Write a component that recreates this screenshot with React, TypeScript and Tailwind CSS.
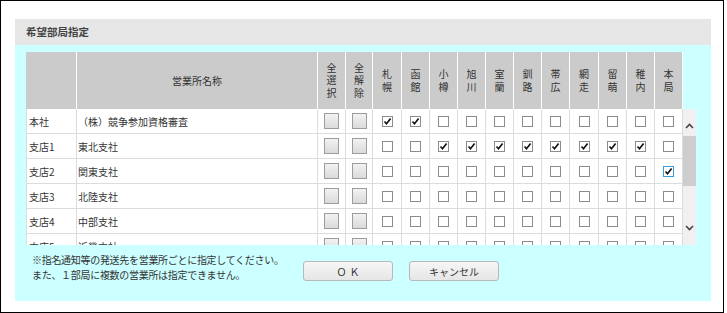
const font = "font-['Noto_Sans_CJK_JP',sans-serif]"

const areas = ["札幌", "函館", "小樽", "旭川", "室蘭", "釧路", "帯広", "網走", "留萌", "稚内", "本局"]
const areaW = ["w-[29px]", "w-[28px]", "w-[28px]", "w-[28px]", "w-[28px]", "w-[28px]", "w-[28px]", "w-[29px]", "w-[28px]", "w-[28px]", "w-[28px]"]

// 0 = off, 1 = on, 2 = on with focus ring
const rows: [string, string, number[]][] = [
  ["本社", "（株）競争参加資格審査", [1, 1, 0, 0, 0, 0, 0, 0, 0, 0, 0]],
  ["支店1", "東北支社", [0, 0, 1, 1, 1, 1, 1, 1, 1, 1, 0]],
  ["支店2", "関東支社", [0, 0, 0, 0, 0, 0, 0, 0, 0, 0, 2]],
  ["支店3", "北陸支社", [0, 0, 0, 0, 0, 0, 0, 0, 0, 0, 0]],
  ["支店4", "中部支社", [0, 0, 0, 0, 0, 0, 0, 0, 0, 0, 0]],
  ["支店5", "近畿支社", [0, 0, 0, 0, 0, 0, 0, 0, 0, 0, 0]],
]

function Vertical({ text }: { text: string }) {
  return (
    <div className="flex flex-col items-center">
      {text.split("").map((c, i) => (
        <span key={i} className="block h-[12.5px] leading-[12.5px]">
          {c}
        </span>
      ))}
    </div>
  )
}

function Check({ state }: { state: number }) {
  return (
    <div
      className={
        state === 2
          ? "flex h-[11px] w-[11px] items-center justify-center border border-[#3b9be0] bg-white"
          : "flex h-[11px] w-[11px] items-center justify-center border border-[#8c8c8c] bg-white"
      }
    >
      {state > 0 && (
        <svg width="9" height="9" viewBox="0 0 9 9">
          <path d="M1.5 4.5 L3.5 6.8 L7.6 1.6" fill="none" stroke="#111" strokeWidth="1.6" />
        </svg>
      )}
    </div>
  )
}

function SquareButton() {
  return <div className="h-[16px] w-[15px] border border-[#9c9c9c] bg-gradient-to-b from-[#f2f2f2] to-[#dadada]" />
}

function Chevron({ up }: { up?: boolean }) {
  return (
    <svg width="9" height="6" viewBox="0 0 9 6">
      <polyline
        points={up ? "1,5 4.5,1.5 8,5" : "1,1 4.5,4.5 8,1"}
        fill="none"
        stroke="#444"
        strokeWidth="1.6"
      />
    </svg>
  )
}

export default function App() {
  return (
    <div className={`h-[313px] w-[724px] border border-black bg-white text-[#333] ${font}`}>
      <div className="ml-[14px] mt-[18px] w-[696px]">
        <div className="flex h-[26px] items-center bg-[#e6e6e6] pl-[11px] text-[10.5px] font-bold text-[#444]">
          希望部局指定
        </div>
        <div className="h-[256px] bg-[#ccffff] pl-[11px] pt-[7px]">
          {/* header */}
          <div className="flex h-[57px] text-[10px]">
            <div className="w-[51px] border-r border-white bg-[#cbcbcb]" />
            <div className="flex w-[241px] items-center justify-center border-r border-white bg-[#cbcbcb]">
              営業所名称
            </div>
            <div className="flex w-[28px] items-center justify-center border-r border-white bg-[#cbcbcb]">
              <Vertical text="全選択" />
            </div>
            <div className="flex w-[27px] items-center justify-center border-r border-white bg-[#cbcbcb]">
              <Vertical text="全解除" />
            </div>
            {areas.map((a, i) => (
              <div
                key={a}
                className={`flex ${areaW[i]} items-center justify-center border-r border-white bg-[#cbcbcb]`}
              >
                <Vertical text={a} />
              </div>
            ))}
          </div>

          {/* body */}
          <div className="flex h-[136px] overflow-hidden">
            <div className="w-[657px] bg-white text-[10px]">
              {rows.map(([code, name, checks]) => (
                <div key={code} className="flex h-[25px] shrink-0 border-b border-[#dcdcdc]">
                  <div className="flex w-[51px] items-center border-x border-[#dcdcdc] pl-[2px]">{code}</div>
                  <div className="flex w-[241px] items-center border-r border-[#dcdcdc] pl-[1px]">{name}</div>
                  <div className="flex w-[28px] items-center justify-center border-r border-[#dcdcdc]">
                    <SquareButton />
                  </div>
                  <div className="flex w-[27px] items-center justify-center border-r border-[#dcdcdc]">
                    <SquareButton />
                  </div>
                  {checks.map((c, i) => (
                    <div
                      key={i}
                      className={`flex ${areaW[i]} items-center justify-center border-r border-[#dcdcdc]`}
                    >
                      <Check state={c} />
                    </div>
                  ))}
                </div>
              ))}
            </div>
            <div className="flex w-[13px] flex-col bg-[#f0f0f0]">
              <div className="flex h-[27px] items-center justify-center pt-[7px]">
                <Chevron up />
              </div>
              <div className="h-[50px] bg-[#cdcdcd]" />
              <div className="flex-1" />
              <div className="flex h-[30px] items-center justify-center pb-[5px]">
                <Chevron />
              </div>
            </div>
          </div>

          {/* footer */}
          <div className="flex pl-[6px] pt-[7px]">
            <div className="w-[271px] whitespace-nowrap text-[10px] leading-[15px] tracking-[-0.3px]">
              <p>※指名通知等の発送先を営業所ごとに指定してください。</p>
              <p>また、１部局に複数の営業所は指定できません。</p>
            </div>
            <button className="mt-[9px] h-[20px] w-[90px] rounded-[3px] border border-[#b8b8b8] bg-gradient-to-b from-[#f6f6f6] to-[#e6e6e6] pl-[3px] text-[10px] tracking-[3px]">
              ＯＫ
            </button>
            <button className="ml-[16px] mt-[9px] h-[20px] w-[90px] rounded-[3px] border border-[#b8b8b8] bg-gradient-to-b from-[#f6f6f6] to-[#e6e6e6] text-[10px]">
              キャンセル
            </button>
          </div>
        </div>
      </div>
    </div>
  )
}
